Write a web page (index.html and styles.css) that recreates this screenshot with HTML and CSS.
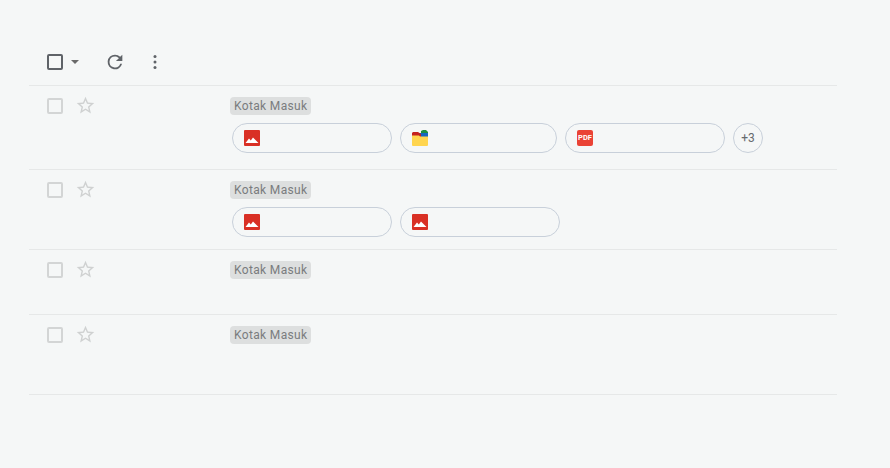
FILE: index.html
```html
<!DOCTYPE html>
<html lang="en">
<head>
    <meta charset="UTF-8">
    <title>Kotak Masuk</title>
    <link rel="stylesheet" href="styles.css">
</head>
<body>

<div class="mail-list">
    <div class="toolbar">
        <span class="check check-dark"></span>
        <svg class="caret" width="8" height="4" viewBox="0 0 10 5"><path d="M0 0h10L5 5z" fill="#6a6a6a"/></svg>
        <svg class="refresh" width="22" height="22" viewBox="0 0 24 24"><path d="M17.65 6.35A7.96 7.96 0 0 0 12 4a8 8 0 1 0 7.73 10h-2.08A6 6 0 1 1 12 6c1.66 0 3.14.69 4.22 1.78L13 11h7V4z" fill="#5f6368"/></svg>
        <svg class="more" width="4" height="14" viewBox="0 0 4 14"><circle cx="2" cy="1.500" r="1.500" fill="#5f6368"/><circle cx="2" cy="7" r="1.500" fill="#5f6368"/><circle cx="2" cy="12.500" r="1.500" fill="#5f6368"/></svg>
    </div>

    <div class="row row-a">
        <div class="row-tools">
            <span class="check"></span>
            <svg class="star" width="21" height="21" viewBox="0 0 24 24"><path d="M22 9.24l-7.19-.62L12 2 9.19 8.63 2 9.24l5.46 4.73L5.82 21 12 17.27 18.18 21l-1.63-7.03zM12 15.4l-3.76 2.27 1-4.28-3.32-2.88 4.38-.38L12 6.1l1.71 4.04 4.38.38-3.32 2.88 1 4.28z" fill="#cfd1d1"/></svg>
        </div>
        <div class="row-body">
            <span class="label">Kotak Masuk</span>
            <div class="chips">
                <div class="chip">
                    <svg class="file-icon" width="16" height="16" viewBox="0 0 16 16"><rect width="16" height="16" rx="1" fill="#d93025"/><path d="M1.500 13 5 8.500l1.800 2L9 7.500l5.500 5.500z" fill="#fff"/></svg>
                </div>
                <div class="chip chip-folder">
                    <svg class="file-icon" width="16" height="16" viewBox="0 0 16 16"><path d="M9 1 11 0h3l2 2v3H9z" fill="#1e8e3e"/><path d="M7 3h9v4H7z" fill="#1565c0"/><path d="M0 3 1 2h5l3 2v3H0z" fill="#c5221f"/><path d="M0 5.500h7l1 1h8V15a1 1 0 0 1-1 1H1a1 1 0 0 1-1-1z" fill="#ffd54f"/></svg>
                </div>
                <div class="chip">
                    <span class="pdf-icon">PDF</span>
                </div>
                <div class="chip-more">+3</div>
            </div>
        </div>
    </div>

    <div class="row row-b">
        <div class="row-tools">
            <span class="check"></span>
            <svg class="star" width="21" height="21" viewBox="0 0 24 24"><path d="M22 9.24l-7.19-.62L12 2 9.19 8.63 2 9.24l5.46 4.73L5.82 21 12 17.27 18.18 21l-1.63-7.03zM12 15.4l-3.76 2.27 1-4.28-3.32-2.88 4.38-.38L12 6.1l1.71 4.04 4.38.38-3.32 2.88 1 4.28z" fill="#cfd1d1"/></svg>
        </div>
        <div class="row-body">
            <span class="label">Kotak Masuk</span>
            <div class="chips">
                <div class="chip">
                    <svg class="file-icon" width="16" height="16" viewBox="0 0 16 16"><rect width="16" height="16" rx="1" fill="#d93025"/><path d="M1.500 13 5 8.500l1.800 2L9 7.500l5.500 5.500z" fill="#fff"/></svg>
                </div>
                <div class="chip">
                    <svg class="file-icon" width="16" height="16" viewBox="0 0 16 16"><rect width="16" height="16" rx="1" fill="#d93025"/><path d="M1.500 13 5 8.500l1.800 2L9 7.500l5.500 5.500z" fill="#fff"/></svg>
                </div>
            </div>
        </div>
    </div>

    <div class="row row-c">
        <div class="row-tools">
            <span class="check"></span>
            <svg class="star" width="21" height="21" viewBox="0 0 24 24"><path d="M22 9.24l-7.19-.62L12 2 9.19 8.63 2 9.24l5.46 4.73L5.82 21 12 17.27 18.18 21l-1.63-7.03zM12 15.4l-3.76 2.27 1-4.28-3.32-2.88 4.38-.38L12 6.1l1.71 4.04 4.38.38-3.32 2.88 1 4.28z" fill="#cfd1d1"/></svg>
        </div>
        <div class="row-body">
            <span class="label">Kotak Masuk</span>
        </div>
    </div>

    <div class="row row-d">
        <div class="row-tools">
            <span class="check"></span>
            <svg class="star" width="21" height="21" viewBox="0 0 24 24"><path d="M22 9.24l-7.19-.62L12 2 9.19 8.63 2 9.24l5.46 4.73L5.82 21 12 17.27 18.18 21l-1.63-7.03zM12 15.4l-3.76 2.27 1-4.28-3.32-2.88 4.38-.38L12 6.1l1.71 4.04 4.38.38-3.32 2.88 1 4.28z" fill="#cfd1d1"/></svg>
        </div>
        <div class="row-body">
            <span class="label">Kotak Masuk</span>
        </div>
    </div>
</div>

</body>
</html>
```

FILE: styles.css
```css
body {
    margin: 0;
    background: #f5f7f7;
    font-family: Roboto, "Liberation Sans", sans-serif;
    color: #5f6368;
}

.mail-list {
    width: 808px;
    margin-left: 29px;
}

.toolbar {
    height: 86px;
    box-sizing: border-box;
    padding: 54px 0 0 18px;
    display: flex;
    align-items: flex-start;
    border-bottom: 1px solid #e6e8e8;
}

.check {
    display: block;
    width: 16px;
    height: 16px;
    margin-top: 1px;
    box-sizing: border-box;
    border: 2px solid #d3d5d5;
    border-radius: 2px;
}

.check-dark {
    margin-top: 0;
    border-color: #5f6368;
}

.caret { margin: 6px 0 0 8px; }
.refresh { margin: -3px 0 0 25px; }
.more { margin: 1px 0 0 27px; }

.row {
    display: flex;
    box-sizing: border-box;
    padding: 11px 0 0 18px;
    border-bottom: 1px solid #e6e8e8;
}

.row-a { height: 84px; }
.row-b { height: 80px; }
.row-c { height: 65px; }
.row-d { height: 80px; }

.row-tools {
    width: 183px;
    display: flex;
    align-items: flex-start;
}

.star { margin: -2px 0 0 11.500px; }

.row-body {
    display: flex;
    flex-direction: column;
    align-items: flex-start;
}

.label {
    display: block;
    height: 18px;
    line-height: 18px;
    padding: 0 4px;
    background: #dddfdf;
    border-radius: 4px;
    font-size: 12px;
    letter-spacing: 0.35px;
    color: #7a7c7e;
}

.chips {
    display: flex;
    gap: 8px;
    margin: 8px 0 0 2px;
}

.chip {
    width: 160px;
    height: 30px;
    box-sizing: border-box;
    padding-left: 11px;
    display: flex;
    align-items: center;
    border: 1px solid #c8d0da;
    border-radius: 15px;
}

.chip-folder { width: 157px; }

.pdf-icon {
    display: block;
    width: 16px;
    height: 16px;
    line-height: 16px;
    text-align: center;
    background: #ea4335;
    border-radius: 2px;
    color: #fff;
    font-size: 7.500px;
    font-weight: 700;
}

.chip-more {
    width: 30px;
    height: 30px;
    box-sizing: border-box;
    border: 1px solid #c8d0da;
    border-radius: 50%;
    display: flex;
    align-items: center;
    justify-content: center;
    font-size: 12px;
    color: #666a6e;
}
```
